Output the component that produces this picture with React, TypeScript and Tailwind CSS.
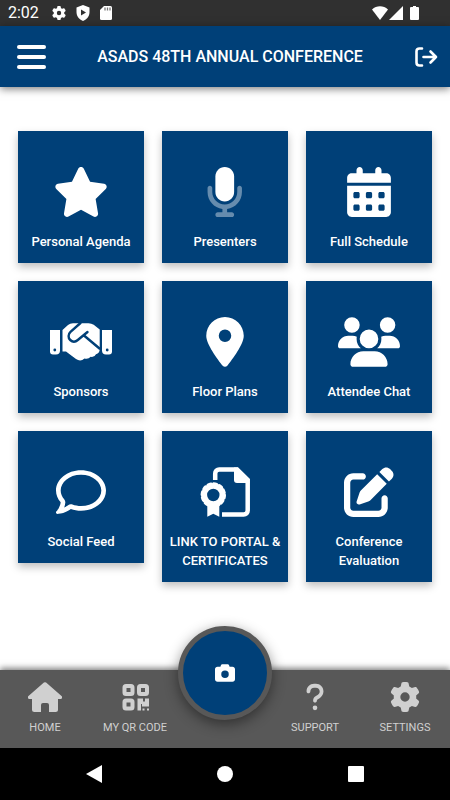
import type { ReactNode } from "react";
import {
  FaCalendarDays,
  FaCamera,
  FaGear,
  FaLocationDot,
  FaPenToSquare,
  FaQuestion,
  FaRegComment,
  FaStar,
  FaUsers,
} from "react-icons/fa6";

const MicrophoneIcon = () => (
  <svg viewBox="0 0 384 512" className="h-[50px]" fill="currentColor">
    <path d="M192 0c-53 0-96 43-96 96v160c0 53 43 96 96 96s96-43 96-96V96c0-53-43-96-96-96z" />
    <path
      opacity=".4"
      d="M64 216c0-13.300-10.700-24-24-24s-24 10.700-24 24v40c0 89.100 66.200 162.700 152 174.400V464h-48c-13.300 0-24 10.700-24 24s10.700 24 24 24h144c13.300 0 24-10.700 24-24s-10.700-24-24-24h-48v-33.600c85.800-11.700 152-85.300 152-174.400v-40c0-13.300-10.700-24-24-24s-24 10.700-24 24v40c0 70.700-57.300 128-128 128S64 326.700 64 256v-40z"
    />
  </svg>
);

const HandshakeIcon = () => (
  <svg viewBox="0 0 62 50" className="h-[50px]" fill="none">
    <path d="M0 13h10v20.500q0 4-4 4H3q-3 0-3-3zM52 13h10v21.500q0 3-3 3h-3q-4 0-4-4z" fill="currentColor" />
    <path
      d="M12.500 13L18 8q2-1.700 5-1.700h15.500q3 0 5.200 1.500l6 4.700V32q0 4.500-3.700 5.200-1.500 3.300-5.300 2.600-2.700 2.900-6.200 1.700-4 3.500-8.500.5L16 34.500h-3.500z"
      fill="currentColor"
    />
    <path
      d="M30.500 6l-10 8.800c-2.500 2.200-2.500 6.200-.3 8.200 2.200 2 5.300 2 7.600 0l9.700-8M34 18.500L49.500 31.500"
      stroke="#004078"
      strokeWidth="2.400"
      strokeLinecap="round"
    />
    <circle cx="4.800" cy="33" r="1.400" fill="#004078" />
    <circle cx="57.200" cy="33" r="1.400" fill="#004078" />
  </svg>
);

const CertificateIcon = () => (
  <svg viewBox="0 0 50 50" className="h-[50px]" fill="none">
    <path
      d="M15.200 13V6.500a4 4 0 0 1 4-4H37L47.700 13v30.500a4 4 0 0 1-4 4H22"
      stroke="currentColor"
      strokeWidth="4.500"
    />
    <path d="M34 .5h4L49.500 12v4H37q-3 0-3-3z" fill="currentColor" />
    <path d="M7.300 36v13.700l6-3 6 3V36z" fill="currentColor" />
    <circle cx="13.300" cy="28" r="9" stroke="currentColor" strokeWidth="5.600" />
    <circle
      cx="13.300"
      cy="28"
      r="11.300"
      stroke="currentColor"
      strokeWidth="2.800"
      strokeLinecap="round"
      strokeDasharray="3.200 2.720"
    />
  </svg>
);

const HomeIcon = () => (
  <svg viewBox="0 0 34 30" className="h-[30px]" fill="currentColor">
    <path d="M15.900.6a1.700 1.700 0 0 1 2.200 0l15.400 13.500c1.200 1.100.5 2.900-1.100 2.900H30v10.500q0 2.500-2.500 2.500H21v-7q0-2-2-2h-4q-2 0-2 2v7H6.500Q4 30 4 27.500V17H1.600C0 17-.7 15.200.5 14.100z" />
  </svg>
);

const QrIcon = () => (
  <svg viewBox="0 0 27 30" className="h-[30px]" fill="none" stroke="currentColor" strokeWidth="4">
    <rect x="2.500" y="4" width="8" height="8" rx="1.500" />
    <rect x="17" y="4" width="8" height="8" rx="1.500" />
    <rect x="2.500" y="18.500" width="8" height="8" rx="1.500" />
    <path
      d="M15.500 16.500h5.500v3h2v-3h4v8h-7V22h-1v6.500h-3.500zM20.500 26.500h2v2h-2zM25 26.500h2v2h-2z"
      fill="currentColor"
      stroke="none"
    />
  </svg>
);

const StatusBar = () => (
  <div className="flex h-[26px] items-center justify-between bg-[#303030] pl-2 pr-[31px] text-white">
    <div className="flex items-center gap-[10px]">
      <span className="w-[34px] text-base leading-5">2:02</span>
      <FaGear className="size-[14px]" />
      <svg viewBox="0 0 14 16" className="h-4">
        <path d="M7 0l6.500 2.500V7c0 4-2.500 7.500-6.500 9C3 14.500.5 11 .5 7V2.500z" fill="#fff" />
        <path d="M5 4.500l5 3-5 3z" fill="#303030" />
      </svg>
      <svg viewBox="0 0 12 14" className="h-[14px]">
        <path d="M4 0h6.500Q12 0 12 1.500v11q0 1.500-1.500 1.500h-9Q0 14 0 12.500V4z" fill="#fff" />
        <path d="M5 1.500v3M7.500 1.500v3M10 1.500v3" stroke="#777" strokeWidth="1.300" />
      </svg>
    </div>
    <div className="flex items-center gap-px">
      <svg viewBox="0 0 16 14" className="h-[14px]" fill="#fff">
        <path d="M0 3.500C4.500-.8 11.500-.8 16 3.500L8 14z" />
      </svg>
      <svg viewBox="0 0 14 14" className="h-[14px]" fill="#fff">
        <path d="M14 0v14H0z" />
      </svg>
      <svg viewBox="0 0 9 14" className="ml-[6px] h-[14px]" fill="#fff">
        <path d="M3 0h3v1h2q1 0 1 1V13q0 1-1 1H1q-1 0-1-1V2q0-1 1-1h2z" />
      </svg>
    </div>
  </div>
);

const Header = () => (
  <header className="relative flex h-[61px] items-center justify-between bg-[#004078] pl-[17px] pr-3 text-white shadow-[0_2px_8px_rgba(0,0,0,0.5)]">
    <button aria-label="Menu" className="flex w-[29px] flex-col gap-[6px]">
      <span className="h-1 rounded-full bg-white" />
      <span className="h-1 rounded-full bg-white" />
      <span className="h-1 rounded-full bg-white" />
    </button>
    <h1 className="text-base font-medium">ASADS 48TH ANNUAL CONFERENCE</h1>
    <button aria-label="Log out">
      <svg
        viewBox="0 0 24 20"
        className="h-5"
        fill="none"
        stroke="currentColor"
        strokeWidth="2.600"
        strokeLinecap="round"
        strokeLinejoin="round"
      >
        <path d="M8 1.500H5.500q-3 0-3 3v11q0 3 3 3H8M9.500 10H22M16.500 4.500L22 10l-5.500 5.500" />
      </svg>
    </button>
  </header>
);

const Tile = ({ icon, label }: { icon: ReactNode; label: string }) => (
  <a
    href="#"
    className="flex flex-col items-center bg-[#004078] px-1 pb-3 pt-9 text-white shadow-[0_4px_8px_rgba(0,0,0,0.25)]"
  >
    {icon}
    <span className="mt-[15px] text-center text-[13px] font-medium leading-[19px]">{label}</span>
  </a>
);

const NavItem = ({ icon, label }: { icon: ReactNode; label: string }) => (
  <a href="#" className="flex flex-1 flex-col items-center gap-2 pt-3 text-[#d0d0d0]">
    {icon}
    <span className="whitespace-nowrap text-[11px] leading-4">{label}</span>
  </a>
);

const App = () => {
  return (
    <div className="flex min-h-screen flex-col bg-white font-['Roboto',sans-serif]">
      <StatusBar />
      <Header />
      <main className="grid flex-1 grid-cols-3 content-start items-start gap-[18px] px-[18px] pb-10 pt-11">
        <Tile icon={<FaStar className="h-[50px] w-14" />} label="Personal Agenda" />
        <Tile icon={<MicrophoneIcon />} label="Presenters" />
        <Tile icon={<FaCalendarDays className="h-[50px] w-11" />} label="Full Schedule" />
        <Tile icon={<HandshakeIcon />} label="Sponsors" />
        <Tile icon={<FaLocationDot className="h-[50px] w-10" />} label="Floor Plans" />
        <Tile icon={<FaUsers className="h-[50px] w-[62px]" />} label="Attendee Chat" />
        <Tile icon={<FaRegComment className="size-[50px]" />} label="Social Feed" />
        <Tile icon={<CertificateIcon />} label="LINK TO PORTAL & CERTIFICATES" />
        <Tile icon={<FaPenToSquare className="size-[50px]" />} label="Conference Evaluation" />
      </main>
      <footer className="relative">
        <nav className="flex h-[78px] bg-[#585858] shadow-[0_-2px_6px_rgba(0,0,0,0.5)]">
          <NavItem icon={<HomeIcon />} label="HOME" />
          <NavItem icon={<QrIcon />} label="MY QR CODE" />
          <div className="flex-1" />
          <NavItem icon={<FaQuestion className="size-[30px]" />} label="SUPPORT" />
          <NavItem icon={<FaGear className="size-[30px]" />} label="SETTINGS" />
        </nav>
        <button
          aria-label="Camera"
          className="absolute -top-11 left-1/2 flex size-[94px] -translate-x-1/2 items-center justify-center rounded-full border-[5px] border-[#585858] bg-[#004078] text-white shadow-[0_4px_14px_rgba(0,0,0,0.45)]"
        >
          <FaCamera className="size-5" />
        </button>
        <div className="flex h-[52px] items-center justify-between bg-black px-[86px]">
          <button aria-label="Back">
            <svg viewBox="0 0 16 18" className="h-[18px]" fill="#fff">
              <path d="M16 0v18L0 9z" />
            </svg>
          </button>
          <button aria-label="Home screen" className="size-4 rounded-full bg-white" />
          <button aria-label="Recent apps" className="size-4 rounded-[1px] bg-white" />
        </div>
      </footer>
    </div>
  );
};

export default App;
